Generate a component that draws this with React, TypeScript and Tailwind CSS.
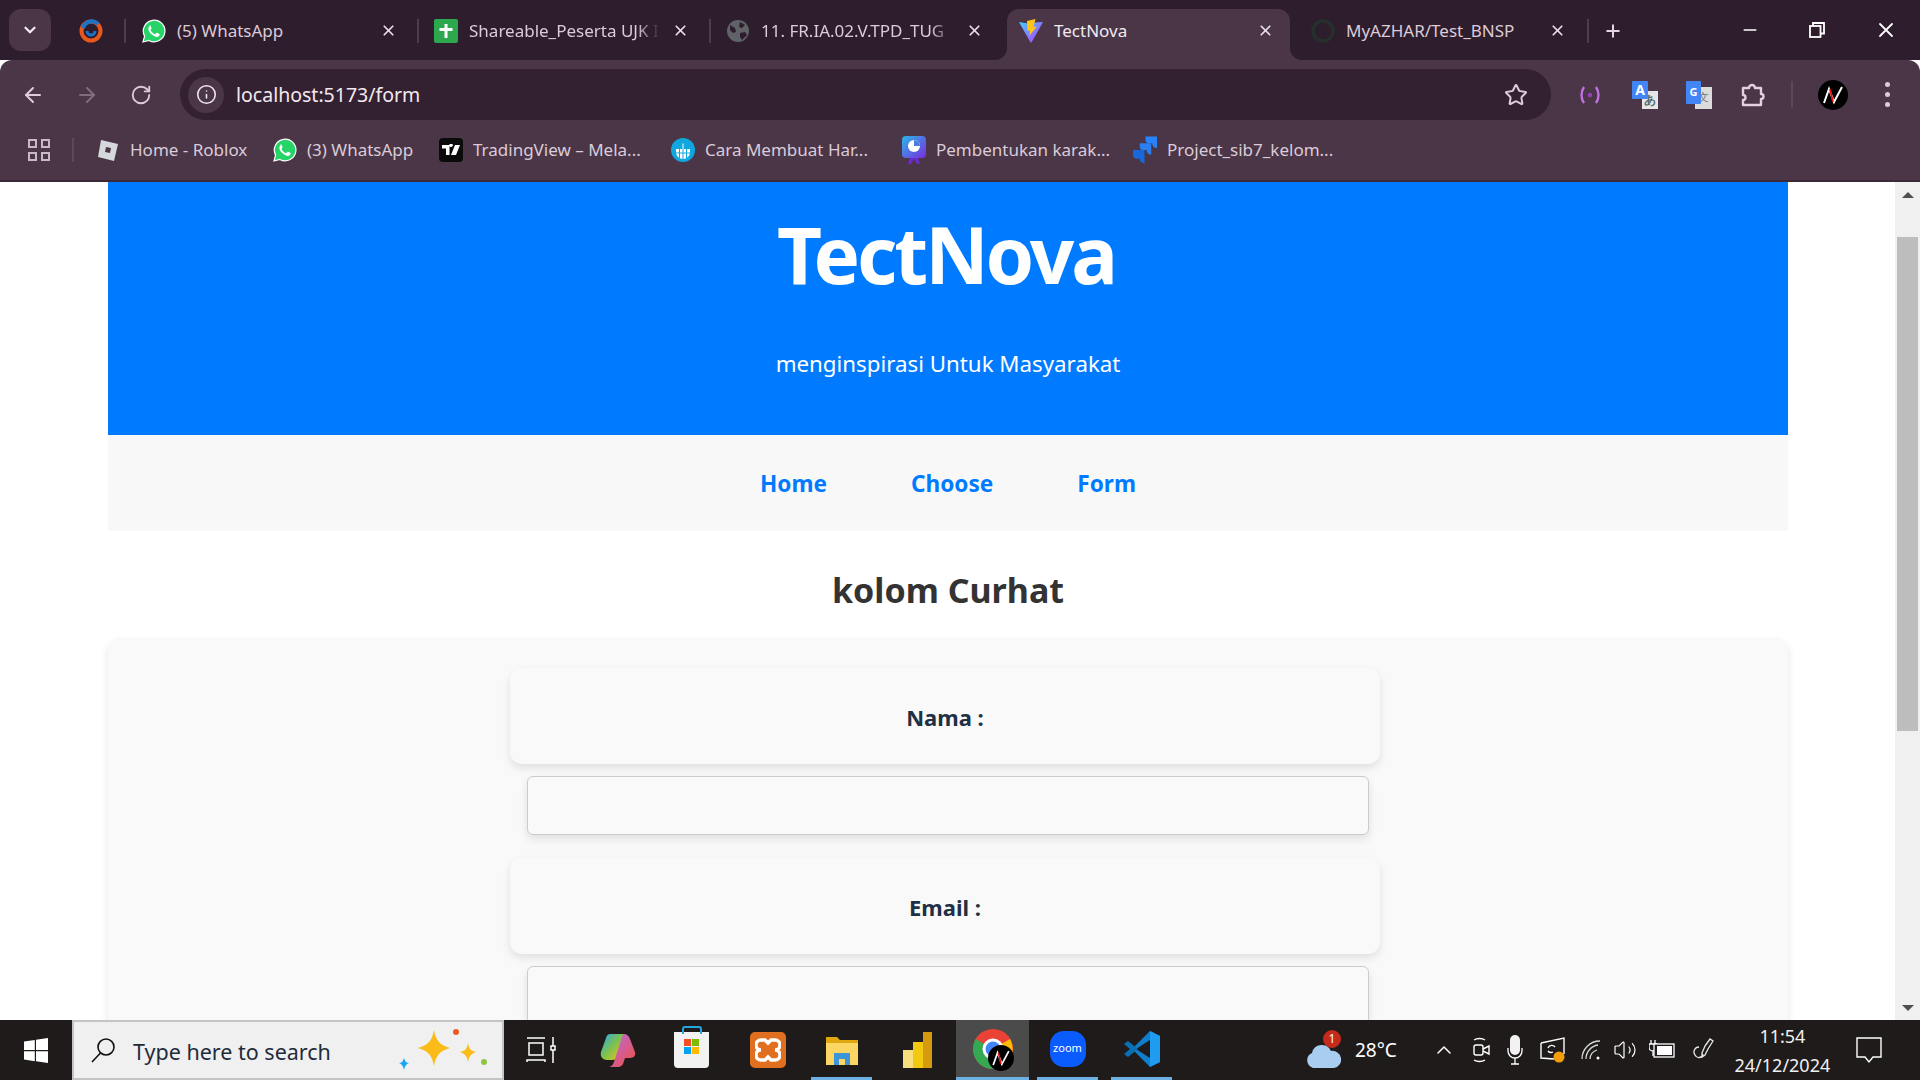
import { ArrowLeft, ArrowRight, ChevronDown, ChevronUp, Info, Minus, Plus, RotateCw, Star, Volume2, X } from "lucide-react";
import { ReactNode } from "react";

const WhatsApp = ({ size = 24 }: { size?: number }) => (
    <svg width={size} height={size} viewBox="0 0 24 24">
        <path d="M1 23l1.6-5.9A10.8 10.8 0 1 1 6.8 21.4z" fill="#25d366" stroke="#fff" strokeWidth="1.2" />
        <path d="M8.6 6.8c-.3 0-.8.1-1.2.6-.5.6-1.1 1.4-1 2.8.2 1.700 1.300 3.300 2.900 4.900 1.700 1.600 3.500 2.500 5.100 2.800 1.300.1 2.500-.6 3-1.500.3-.6.3-1.200.2-1.400l-2.500-1.300c-.3-.1-.5 0-.7.2l-.9 1.100c-.2.200-.4.200-.7.100-1.900-.8-3.200-2-4.200-3.900-.1-.3 0-.4.100-.6l.8-1c.1-.2.100-.4 0-.6l-1-2.400c-.2-.6-.5-.6-1.900-.6z" fill="#fff" />
    </svg>
);

const Vite = () => (
    <svg width="24" height="24" viewBox="0 0 24 24">
        <defs>
            <linearGradient id="vg" x1="0" y1="0" x2="1" y2="1">
                <stop offset="0" stopColor="#41d1ff" />
                <stop offset="1" stopColor="#bd34fe" />
            </linearGradient>
        </defs>
        <path d="M0 3l9 1.600L15 3.500 24 3 12.500 23.500 11.500 23.500z" fill="url(#vg)" />
        <path d="M16.500 0L8 2 8.500 12 11 11.500 10.500 16.500 18 7.500 14.500 8z" fill="#ffc517" />
    </svg>
);

const Avatar = ({ size = 30 }: { size?: number }) => (
    <svg width={size} height={size} viewBox="0 0 30 30">
        <circle cx="15" cy="15" r="15" fill="#000" />
        <path d="M6 23l5-14 5 13L24 7" fill="none" stroke="#fff" strokeWidth="2" />
        <path d="M12 9l3 13" fill="none" stroke="#e01010" strokeWidth="1.800" />
    </svg>
);

const Tab = ({ icon, title, width, active, fade, iconPad = 15, closeGap = 20 }: { icon: ReactNode; title: string; width: number; active?: boolean; fade?: boolean; iconPad?: number; closeGap?: number }) => (
    <div
        className={active ? "relative flex h-[51px] items-center rounded-t-[12px] bg-[#4a3647] pb-[8px] text-[#f3e9f1]" : "flex h-[51px] items-center pb-[8px] text-[#dccbd8]"}
        style={{ width, paddingLeft: iconPad }}
    >
        <div className="mr-[11px] flex w-[24px] shrink-0 justify-center">{icon}</div>
        <div className={fade ? "flex-1 overflow-hidden whitespace-nowrap text-[17px] [mask-image:linear-gradient(to_right,black_88%,transparent)]" : "flex-1 overflow-hidden whitespace-nowrap text-[17px]"}>
            {title}
        </div>
        <X size={17} strokeWidth={2.4} className="ml-[12px] shrink-0 text-[#eadfe7]" style={{ marginRight: closeGap }} />
        {active && (
            <>
                <svg width="12" height="12" viewBox="0 0 12 12" className="absolute bottom-0 -left-[12px]">
                    <path d="M0 12A12 12 0 0 0 12 0V12z" fill="#4a3647" />
                </svg>
                <svg width="12" height="12" viewBox="0 0 12 12" className="absolute -right-[12px] bottom-0">
                    <path d="M12 12A12 12 0 0 1 0 0V12z" fill="#4a3647" />
                </svg>
            </>
        )}
    </div>
);

const TabDivider = () => <div className="mb-[17px] h-[24px] w-[2px] shrink-0 bg-[#4f3d4c]" />;

const Bookmark = ({ icon, title, width }: { icon: ReactNode; title: string; width: number }) => (
    <div className="flex items-center gap-[10px] whitespace-nowrap text-[17px] text-[#dccbd8]" style={{ width }}>
        <div className="flex w-[24px] shrink-0 justify-center">{icon}</div>
        {title}
    </div>
);

const TabStrip = () => (
    <div className="flex h-[60px] items-end bg-[#2e1d2d]">
        <div className="mb-[9px] ml-[9px] flex h-[42px] w-[42px] items-center justify-center rounded-[12px] bg-[#4a3647]">
            <ChevronDown size={18} strokeWidth={3} className="text-[#f3e9f1]" />
        </div>
        <div className="flex h-[51px] w-[73px] items-center justify-center pb-[8px] pl-[6px]">
            <svg width="24" height="24" viewBox="0 0 24 24">
                <circle cx="12" cy="12" r="9.500" fill="none" stroke="#e8581c" strokeWidth="4" />
                <path d="M4 9A9 9 0 0 1 19 5" fill="none" stroke="#1a73c7" strokeWidth="4" />
                <path d="M16 12a4 4 0 0 1-8 0" fill="none" stroke="#1a73c7" strokeWidth="3" />
            </svg>
        </div>
        <TabDivider />
        <Tab width={291} iconPad={16} title="(5) WhatsApp" icon={<WhatsApp />} />
        <TabDivider />
        <Tab width={290} title="Shareable_Peserta UJK I" fade icon={
            <div className="flex h-[24px] w-[24px] items-center justify-center rounded-[2px] bg-[#2ea84f]">
                <svg width="16" height="16" viewBox="0 0 16 16"><path d="M6.500 1h3v4h5v3h-5v7h-3V8h-5V5h5z" fill="#fff" /></svg>
            </div>
        } />
        <TabDivider />
        <Tab width={296} closeGap={24} title="11. FR.IA.02.V.TPD_TUG" fade icon={
            <svg width="24" height="24" viewBox="0 0 24 24">
                <circle cx="12" cy="12" r="11" fill="#5f6368" />
                <path d="M4 6l5 3 1 4-3 1-3-3zM14 3l5 3-3 3-3-1zM14 14l5-1 2 3-5 5-2-3z" fill="#2e1d2d" />
            </svg>
        } />
        <Tab width={283} active iconPad={12} closeGap={16} title="TectNova" icon={<Vite />} />
        <Tab width={297} iconPad={21} closeGap={21} title="MyAZHAR/Test_BNSP" icon={
            <svg width="24" height="24" viewBox="0 0 24 24">
                <circle cx="12" cy="12" r="10" fill="none" stroke="#25302c" strokeWidth="3.500" />
            </svg>
        } />
        <TabDivider />
        <div className="mb-[17px] ml-[14px] flex h-[24px] w-[20px] items-center justify-center">
            <Plus size={22} strokeWidth={2.400} className="text-[#e4d6e0]" />
        </div>
        <div className="mb-[9px] ml-auto flex h-[42px] items-center pr-[22px] text-white">
            <Minus size={20} strokeWidth={1.800} />
            <div className="ml-[49px]">
                <svg width="16" height="16" viewBox="0 0 16 16" fill="none" stroke="#fff" strokeWidth="1.800">
                    <rect x="1" y="4" width="10.500" height="11" />
                    <path d="M4 3.500V1h11v10.500h-3" />
                </svg>
            </div>
            <X size={24} strokeWidth={1.800} className="ml-[49px]" />
        </div>
    </div>
);

const Toolbar = () => (
    <div className="flex h-[60px] items-center rounded-t-[12px] bg-[#4a3647] pt-[9px] pr-[26px] text-[#dccbd8]">
        <ArrowLeft size={24} strokeWidth={2} className="ml-[21px]" />
        <ArrowRight size={24} strokeWidth={2} className="ml-[30px] text-[#806d7c]" />
        <RotateCw size={22} strokeWidth={2} className="ml-[31px]" />
        <div className="ml-[28px] flex h-[51px] w-[1371px] items-center rounded-full bg-[#332131] pr-[23px] pl-[8px]">
            <div className="flex h-[36px] w-[36px] items-center justify-center rounded-full bg-[#4a3647]">
                <Info size={21} strokeWidth={1.800} className="text-[#f0e6ee]" />
            </div>
            <span className="ml-[12px] text-[19.5px] text-[#f3e9f1]">localhost:5173/form</span>
            <Star size={24} strokeWidth={2} className="ml-auto" />
        </div>
        <svg width="24" height="24" viewBox="0 0 24 24" fill="none" stroke="#c070e0" strokeWidth="2.400" className="ml-[27px]">
            <path d="M6 4a14 14 0 0 0 0 16M18 4a14 14 0 0 1 0 16" />
            <circle cx="12" cy="12" r="2.200" fill="#9a3cc0" stroke="none" />
        </svg>
        <div className="relative ml-[30px] h-[28px] w-[26px]">
            <div className="absolute right-0 bottom-0 flex h-[18px] w-[16px] items-center justify-center bg-[#e6e6e6] text-[12px] font-bold text-[#4f6d75]">あ</div>
            <div className="absolute top-0 left-0 flex h-[18px] w-[16px] items-center justify-center rounded-[1px] bg-[#4285f4] text-[14px] font-bold text-white">A</div>
        </div>
        <div className="relative ml-[28px] h-[28px] w-[26px]">
            <div className="absolute right-0 bottom-0 flex h-[22px] w-[17px] items-center justify-center bg-[#dcdcdc] text-[11px] text-[#777]">文</div>
            <div className="absolute top-0 left-0 flex h-[23px] w-[15px] items-center justify-center rounded-[1px] bg-[#4285f4] text-[11px] font-bold text-white">G</div>
        </div>
        <svg width="26" height="26" viewBox="0 0 26 26" fill="none" stroke="#e3cfdf" strokeWidth="2.400" className="ml-[28px]">
            <path d="M3 6h6a3 3 0 0 1 6 0h6v6a2.500 2.500 0 0 1 0 5v6H3v-5a2.500 2.500 0 0 0 0-5z" strokeLinejoin="round" />
        </svg>
        <div className="ml-[25px] h-[27px] w-[2px] bg-[#5c4859]" />
        <div className="ml-[25px]"><Avatar /></div>
        <div className="ml-[37px] flex flex-col gap-[5px]">
            <div className="h-[5px] w-[5px] rounded-full bg-[#dccbd8]" />
            <div className="h-[5px] w-[5px] rounded-full bg-[#dccbd8]" />
            <div className="h-[5px] w-[5px] rounded-full bg-[#dccbd8]" />
        </div>
    </div>
);

const BookmarksBar = () => (
    <div className="flex h-[62px] items-center border-b-2 border-[#3a2a38] bg-[#4a3647]">
        <div className="ml-[28px] grid w-[22px] grid-cols-2 gap-[4px]">
            <div className="h-[9px] w-[9px] border-2 border-[#c9b8c5]" />
            <div className="h-[9px] w-[9px] border-2 border-[#c9b8c5]" />
            <div className="h-[9px] w-[9px] border-2 border-[#c9b8c5]" />
            <div className="h-[9px] w-[9px] border-2 border-[#c9b8c5]" />
        </div>
        <div className="mr-[22px] ml-[22px] h-[24px] w-[2px] bg-[#5c4859]" />
        <Bookmark width={177} title="Home - Roblox" icon={
            <svg width="24" height="24" viewBox="0 0 24 24">
                <path d="M5 2l17 4-4 17-16-4z" fill="#d5d8dc" />
                <path d="M10 9l5 1-1 5-5-1z" fill="#4a3647" />
            </svg>
        } />
        <Bookmark width={166} title="(3) WhatsApp" icon={<WhatsApp />} />
        <Bookmark width={232} title="TradingView – Mela..." icon={
            <div className="flex h-[24px] w-[24px] items-center justify-center rounded-[4px] bg-[#0b0b0b]">
                <svg width="18" height="12" viewBox="0 0 18 12"><path d="M0 1h7.500v10H4V4.500H0zM9 3a1.800 1.800 0 1 1 .1 0zM13 1h5l-4 10H9z" fill="#fff" /></svg>
            </div>
        } />
        <Bookmark width={231} title="Cara Membuat Har..." icon={
            <svg width="24" height="24" viewBox="0 0 24 24">
                <circle cx="12" cy="12" r="12" fill="#10a7de" />
                <path d="M5 11h14v3a7 7 0 0 1-14 0zM11.500 11V5.500h1V11" fill="#fff" />
                <path d="M8.500 11v9M12 11v10M15.500 11v9M5 15h14" stroke="#10a7de" strokeWidth="1" />
            </svg>
        } />
        <Bookmark width={231} title="Pembentukan karak..." icon={
            <svg width="24" height="28" viewBox="0 0 24 28">
                <defs>
                    <linearGradient id="pb" x1="0" y1="0" x2="1" y2="1">
                        <stop offset="0" stopColor="#2bb6e8" />
                        <stop offset="1" stopColor="#7a2be0" />
                    </linearGradient>
                </defs>
                <rect width="24" height="22" rx="4" fill="url(#pb)" />
                <path d="M8 22l-2 6h3l3-5 3 5h3l-2-6z" fill="#6a2bd0" />
                <circle cx="12" cy="10" r="6" fill="#fff" />
                <path d="M12 10V4a6 6 0 0 1 6 6z" fill="#4a7fe0" />
            </svg>
        } />
        <Bookmark width={215} title="Project_sib7_kelom..." icon={
            <svg width="25" height="28" viewBox="0 0 25 28" fill="#2b7ff0">
                <path d="M13 0h12v12a5 5 0 0 1-5-5h-3a4 4 0 0 1-4-4z" fill="#2684ff" />
                <path d="M7 7h12v12a5 5 0 0 1-5-5h-3a4 4 0 0 1-4-4z" />
                <path d="M0 14h12v14a5 5 0 0 1-5-5H4a4 4 0 0 1-4-4z" fill="#1868db" />
            </svg>
        } />
    </div>
);

const Field = ({ label }: { label: string }) => (
    <>
        <div className="ml-[402px] flex h-[96px] w-[870px] items-center justify-center rounded-xl bg-[#f9f9f9] pt-[2px] text-[22px] font-bold text-[#1f3044] shadow-[0_4px_8px_rgba(0,0,0,0.1)]">
            {label}
        </div>
        <input className="mt-[12px] ml-[419px] block h-[59px] w-[842px] shrink-0 rounded-[6px] border border-[#cccccc] bg-[#f9f9f9] shadow-[0_4px_8px_rgba(0,0,0,0.1)]" />
    </>
);

const Page = () => (
    <div className="flex-1 overflow-hidden bg-white pr-[107px] pl-[108px]">
        <header className="h-[253px] bg-[#007bff] text-center text-white">
            <h1 className="pt-[32px] pr-[4px] text-[78px] leading-[80px] font-bold tracking-[-3px]">TectNova</h1>
            <p className="mt-[54px] text-[22.3px] leading-[32px]">menginspirasi Untuk Masyarakat</p>
        </header>
        <nav className="flex h-[96px] items-center justify-center gap-[84px] bg-[#f8f8f8] pt-[2px] text-[22.6px] font-bold text-[#007bff]">
            <span>Home</span>
            <span>Choose</span>
            <span>Form</span>
        </nav>
        <h2 className="mt-[34px] h-[50px] text-center text-[34px] leading-[50px] font-bold text-[#333333]">kolom Curhat</h2>
        <section className="mt-[23px] h-[500px] rounded-xl bg-[#f9f9f9] pt-[30px] shadow-[0_4px_8px_rgba(0,0,0,0.1)]">
            <Field label="Nama :" />
            <div className="h-[23px]" />
            <Field label="Email :" />
        </section>
    </div>
);

const Scrollbar = () => (
    <div className="flex w-[25px] shrink-0 flex-col items-center bg-[#f0f0f0]">
        <div className="flex h-[25px] items-center justify-center">
            <div className="h-0 w-0 border-x-[6px] border-b-[6px] border-x-transparent border-b-[#505050]" />
        </div>
        <div className="mt-[30px] h-[494px] w-[21px] bg-[#bdbdbd]" />
        <div className="mt-auto flex h-[25px] items-center justify-center">
            <div className="h-0 w-0 border-x-[6px] border-t-[6px] border-x-transparent border-t-[#505050]" />
        </div>
    </div>
);

const Taskbar = () => (
    <div className="flex h-[60px] items-center bg-[#1f1b1b] text-white">
        <svg width="24" height="25" viewBox="0 0 24 25" fill="#fff" className="ml-[24px]">
            <path d="M0 3.500L10.800 2v10H0zM12 1.800L24 0v12H12zM0 13.200h10.800v10L0 21.500zM12 13.200h12V25l-12-1.800z" />
        </svg>
        <div className="ml-[24px] flex h-[60px] w-[432px] items-center border-2 border-[#c4c4c4] bg-[#f0f0f0] pl-[16px] text-[#1f2b3a]">
            <svg width="26" height="26" viewBox="0 0 26 26" fill="none" stroke="#111" strokeWidth="1.600">
                <circle cx="16" cy="10" r="8" />
                <path d="M10.500 16L2 25" />
            </svg>
            <span className="ml-[17px] pt-[4px] text-[21.5px]">Type here to search</span>
            <svg width="92" height="50" viewBox="0 0 92 50" className="mr-[12px] ml-auto">
                <path d="M36 5c2 11 6 15 16 18-10 3-14 7-16 18-2-11-6-15-16-18 10-3 14-7 16-18z" fill="#fbbc1a" />
                <path d="M70 18c1 6 3 8 8 9-5 2-7 4-8 10-1-6-3-8-8-10 5-1 7-3 8-9z" fill="#fbbc1a" />
                <path d="M6 33c1 3 2 5 5 5-3 1-4 3-5 7-1-4-2-6-5-7 3 0 4-2 5-5z" fill="#1aa5f0" />
                <circle cx="58" cy="7" r="3" fill="#f05a22" />
                <circle cx="86" cy="37" r="3" fill="#8cc63f" />
            </svg>
        </div>
        <svg width="30" height="30" viewBox="0 0 30 30" fill="none" stroke="#fff" strokeWidth="1.500" className="ml-[22px]">
            <path d="M1 3h18M1 27V25h18v2M3 8h14v12H3zM27 2v26" />
            <rect x="25" y="11" width="4" height="4" fill="#1f1b1b" />
        </svg>
        <svg width="36" height="36" viewBox="0 0 36 36" className="ml-[44px]">
            <defs>
                <linearGradient id="cp1" x1="0" y1="0" x2="1" y2="1">
                    <stop offset="0" stopColor="#2aa8f0" />
                    <stop offset="0.5" stopColor="#7fc24a" />
                    <stop offset="1" stopColor="#f5c518" />
                </linearGradient>
                <linearGradient id="cp2" x1="0" y1="0" x2="1" y2="1">
                    <stop offset="0" stopColor="#b56bf0" />
                    <stop offset="1" stopColor="#f0503c" />
                </linearGradient>
            </defs>
            <path d="M10 2h14l-6 22c-1 3-3 4-6 4H7c-5 0-7-4-6-8L6 6c1-3 2-4 4-4z" fill="url(#cp1)" />
            <path d="M24 2c3 0 5 2 6 5l5 13c1 3-1 6-5 6h-5l-2 6c-1 2-3 3-5 3H8c3 0 5-2 6-5l8-25z" fill="url(#cp2)" />
        </svg>
        <div className="ml-[38px] flex h-[36px] w-[35px] flex-col items-center rounded-b-[4px] bg-[#f2f2f2]">
            <div className="-mt-[6px] h-[8px] w-[20px] rounded-t-[3px] border-2 border-b-0 border-[#22a7e0]" />
            <div className="mt-[5px] grid grid-cols-2 gap-[1px]">
                <div className="h-[7px] w-[7px] bg-[#f25022]" />
                <div className="h-[7px] w-[7px] bg-[#7fba00]" />
                <div className="h-[7px] w-[7px] bg-[#00a4ef]" />
                <div className="h-[7px] w-[7px] bg-[#ffb900]" />
            </div>
        </div>
        <div className="ml-[41px] flex h-[36px] w-[36px] items-center justify-center rounded-[5px] bg-[#e0701f]">
            <svg width="26" height="26" viewBox="0 0 26 26" fill="none" stroke="#fff" strokeWidth="3.500">
                <path d="M10 3H6a3 3 0 0 0 0 10 3 3 0 0 0 0 10h4l3-3 3 3h4a3 3 0 0 0 0-10 3 3 0 0 0 0-10h-4l-3 3z" />
            </svg>
        </div>
        <div className="ml-[25px] flex h-[60px] w-[61px] flex-col items-center justify-end border-b-[3px] border-[#6cb0e4] pb-[12px]">
            <svg width="32" height="30" viewBox="0 0 32 30">
                <path d="M0 2h11l3 3h18v7H0z" fill="#e0a70f" />
                <path d="M0 8h32v22H0z" fill="#fbd663" />
                <path d="M8 18h16v12h-5v-6h-6v6H8z" fill="#3d94d6" />
            </svg>
        </div>
        <div className="ml-[31px] flex items-end">
            <div className="h-[18px] w-[10px] bg-[#f7de7e]" />
            <div className="h-[26px] w-[10px] bg-[#f2c811]" />
            <div className="h-[36px] w-[9px] bg-[#d69a0e]" />
        </div>
        <div className="relative ml-[24px] flex h-[60px] w-[73px] items-center justify-center border-b-[3px] border-[#6cb0e4] bg-[#4b4b4b]">
            <svg width="40" height="40" viewBox="0 0 40 40">
                <circle cx="20" cy="20" r="20" fill="#ea4335" />
                <path d="M20 40A20 20 0 0 1 2.700 10L20 20z" fill="#34a853" />
                <path d="M20 20L37 10A20 20 0 0 1 20 40z" fill="#fbbc05" />
                <circle cx="20" cy="20" r="9" fill="#4285f4" stroke="#fff" strokeWidth="3" />
            </svg>
            <div className="absolute right-[15px] bottom-[6px]"><Avatar size={26} /></div>
        </div>
        <div className="ml-[8px] flex h-[60px] w-[61px] items-center justify-center border-b-[3px] border-[#6cb0e4]">
            <div className="flex h-[36px] w-[36px] items-center justify-center rounded-[14px] bg-[#0b5cff] text-[11px] text-white">zoom</div>
        </div>
        <div className="ml-[13px] flex h-[60px] w-[61px] items-center justify-center border-b-[3px] border-[#6cb0e4]">
            <svg width="36" height="36" viewBox="0 0 36 36">
                <path d="M26 0L8 18l18 18 10-5V5z" fill="#0f7fcc" />
                <path d="M26 0l10 5v26l-10 5z" fill="#1f9cf0" />
                <path d="M26 9L12 18l14 9z" fill="#1f1b1b" />
                <path d="M4 10L0 13l6 5-6 5 4 3 10-8z" fill="#0a6fb5" />
            </svg>
        </div>
        <div className="relative ml-[133px] h-[36px] w-[36px]">
            <svg width="36" height="24" viewBox="0 0 36 24" className="absolute bottom-0 left-0">
                <path d="M8 24a8 8 0 0 1-1-15 10 10 0 0 1 19-2 8.500 8.500 0 0 1 3 17z" fill="#a9cdf0" />
            </svg>
            <div className="absolute -top-[2px] right-0 flex h-[18px] w-[18px] items-center justify-center rounded-full bg-[#c42b1c] text-[12px]">1</div>
        </div>
        <span className="ml-[14px] text-[19px]">28°C</span>
        <ChevronUp size={24} strokeWidth={1.500} className="ml-[35px]" />
        <svg width="18" height="26" viewBox="0 0 18 26" fill="none" stroke="#fff" strokeWidth="1.400" className="ml-[16px]">
            <rect x="2" y="8" width="9" height="10" rx="2" />
            <path d="M11 12l6-3v8l-6-3M2 3c3-2 8-2 11 0M2 23c3 2 8 2 11 0" />
        </svg>
        <svg width="16" height="30" viewBox="0 0 16 30" className="ml-[17px]">
            <rect x="3" y="0" width="10" height="20" rx="5" fill="#f2f2f2" />
            <path d="M1 13v3a7 7 0 0 0 14 0v-3M8 23v6M4 29h8" fill="none" stroke="#fff" strokeWidth="1.300" />
        </svg>
        <svg width="26" height="26" viewBox="0 0 26 26" fill="none" stroke="#fff" strokeWidth="1.400" className="ml-[17px]">
            <path d="M1 6l23-5v16M1 6v15l13 1" />
            <path d="M8 11a4 4 0 0 1 7-1M13 15a4 4 0 0 1-5-1" />
            <circle cx="19" cy="20" r="5.500" fill="#f59e0b" stroke="none" />
        </svg>
        <svg width="20" height="20" viewBox="0 0 20 20" fill="none" stroke="#d8d8d8" strokeWidth="1.300" className="ml-[15px]">
            <path d="M1 19A18 18 0 0 1 19 1M5 19A14 14 0 0 1 17 5M9 19a10 10 0 0 1 7-9" />
            <circle cx="17" cy="18" r="1.500" fill="#fff" stroke="none" />
        </svg>
        <Volume2 size={24} strokeWidth={1.200} className="ml-[12px]" />
        <svg width="26" height="20" viewBox="0 0 26 20" fill="none" stroke="#fff" strokeWidth="1.300" className="ml-[12px]">
            <path d="M2 0v4M6 0v4M0 4h8v3a4 4 0 0 1-8 0zM4 11v5" />
            <rect x="5" y="4" width="20" height="13" fill="#1f1b1b" />
            <rect x="8" y="6" width="15" height="9" fill="#fff" stroke="none" />
        </svg>
        <svg width="22" height="24" viewBox="0 0 22 24" fill="none" stroke="#e8e8e8" strokeWidth="1.300" className="ml-[18px]">
            <path d="M12 8l5-7 3 2-5 8-3 6-3 2 0-4zM6 9a5 5 0 0 0-4 8c2 4 7 3 8-1" />
        </svg>
        <div className="ml-[10px] flex w-[115px] flex-col items-center gap-[9px] text-[18px] leading-[20px] text-[#f0f0f0]">
            <span>11:54</span>
            <span>24/12/2024</span>
        </div>
        <svg width="26" height="28" viewBox="0 0 26 28" fill="none" stroke="#fff" strokeWidth="1.400" className="ml-[16px]">
            <path d="M1 2h24v19h-8l-4 5-4-5H1z" />
        </svg>
    </div>
);

const App = () => {
    return (
        <div className="flex h-screen w-[1920px] flex-col overflow-hidden bg-white font-['Noto_Sans',sans-serif]">
            <TabStrip />
            <Toolbar />
            <BookmarksBar />
            <div className="flex h-[838px] overflow-hidden">
                <Page />
                <Scrollbar />
            </div>
            <Taskbar />
        </div>
    );
};

export default App;
